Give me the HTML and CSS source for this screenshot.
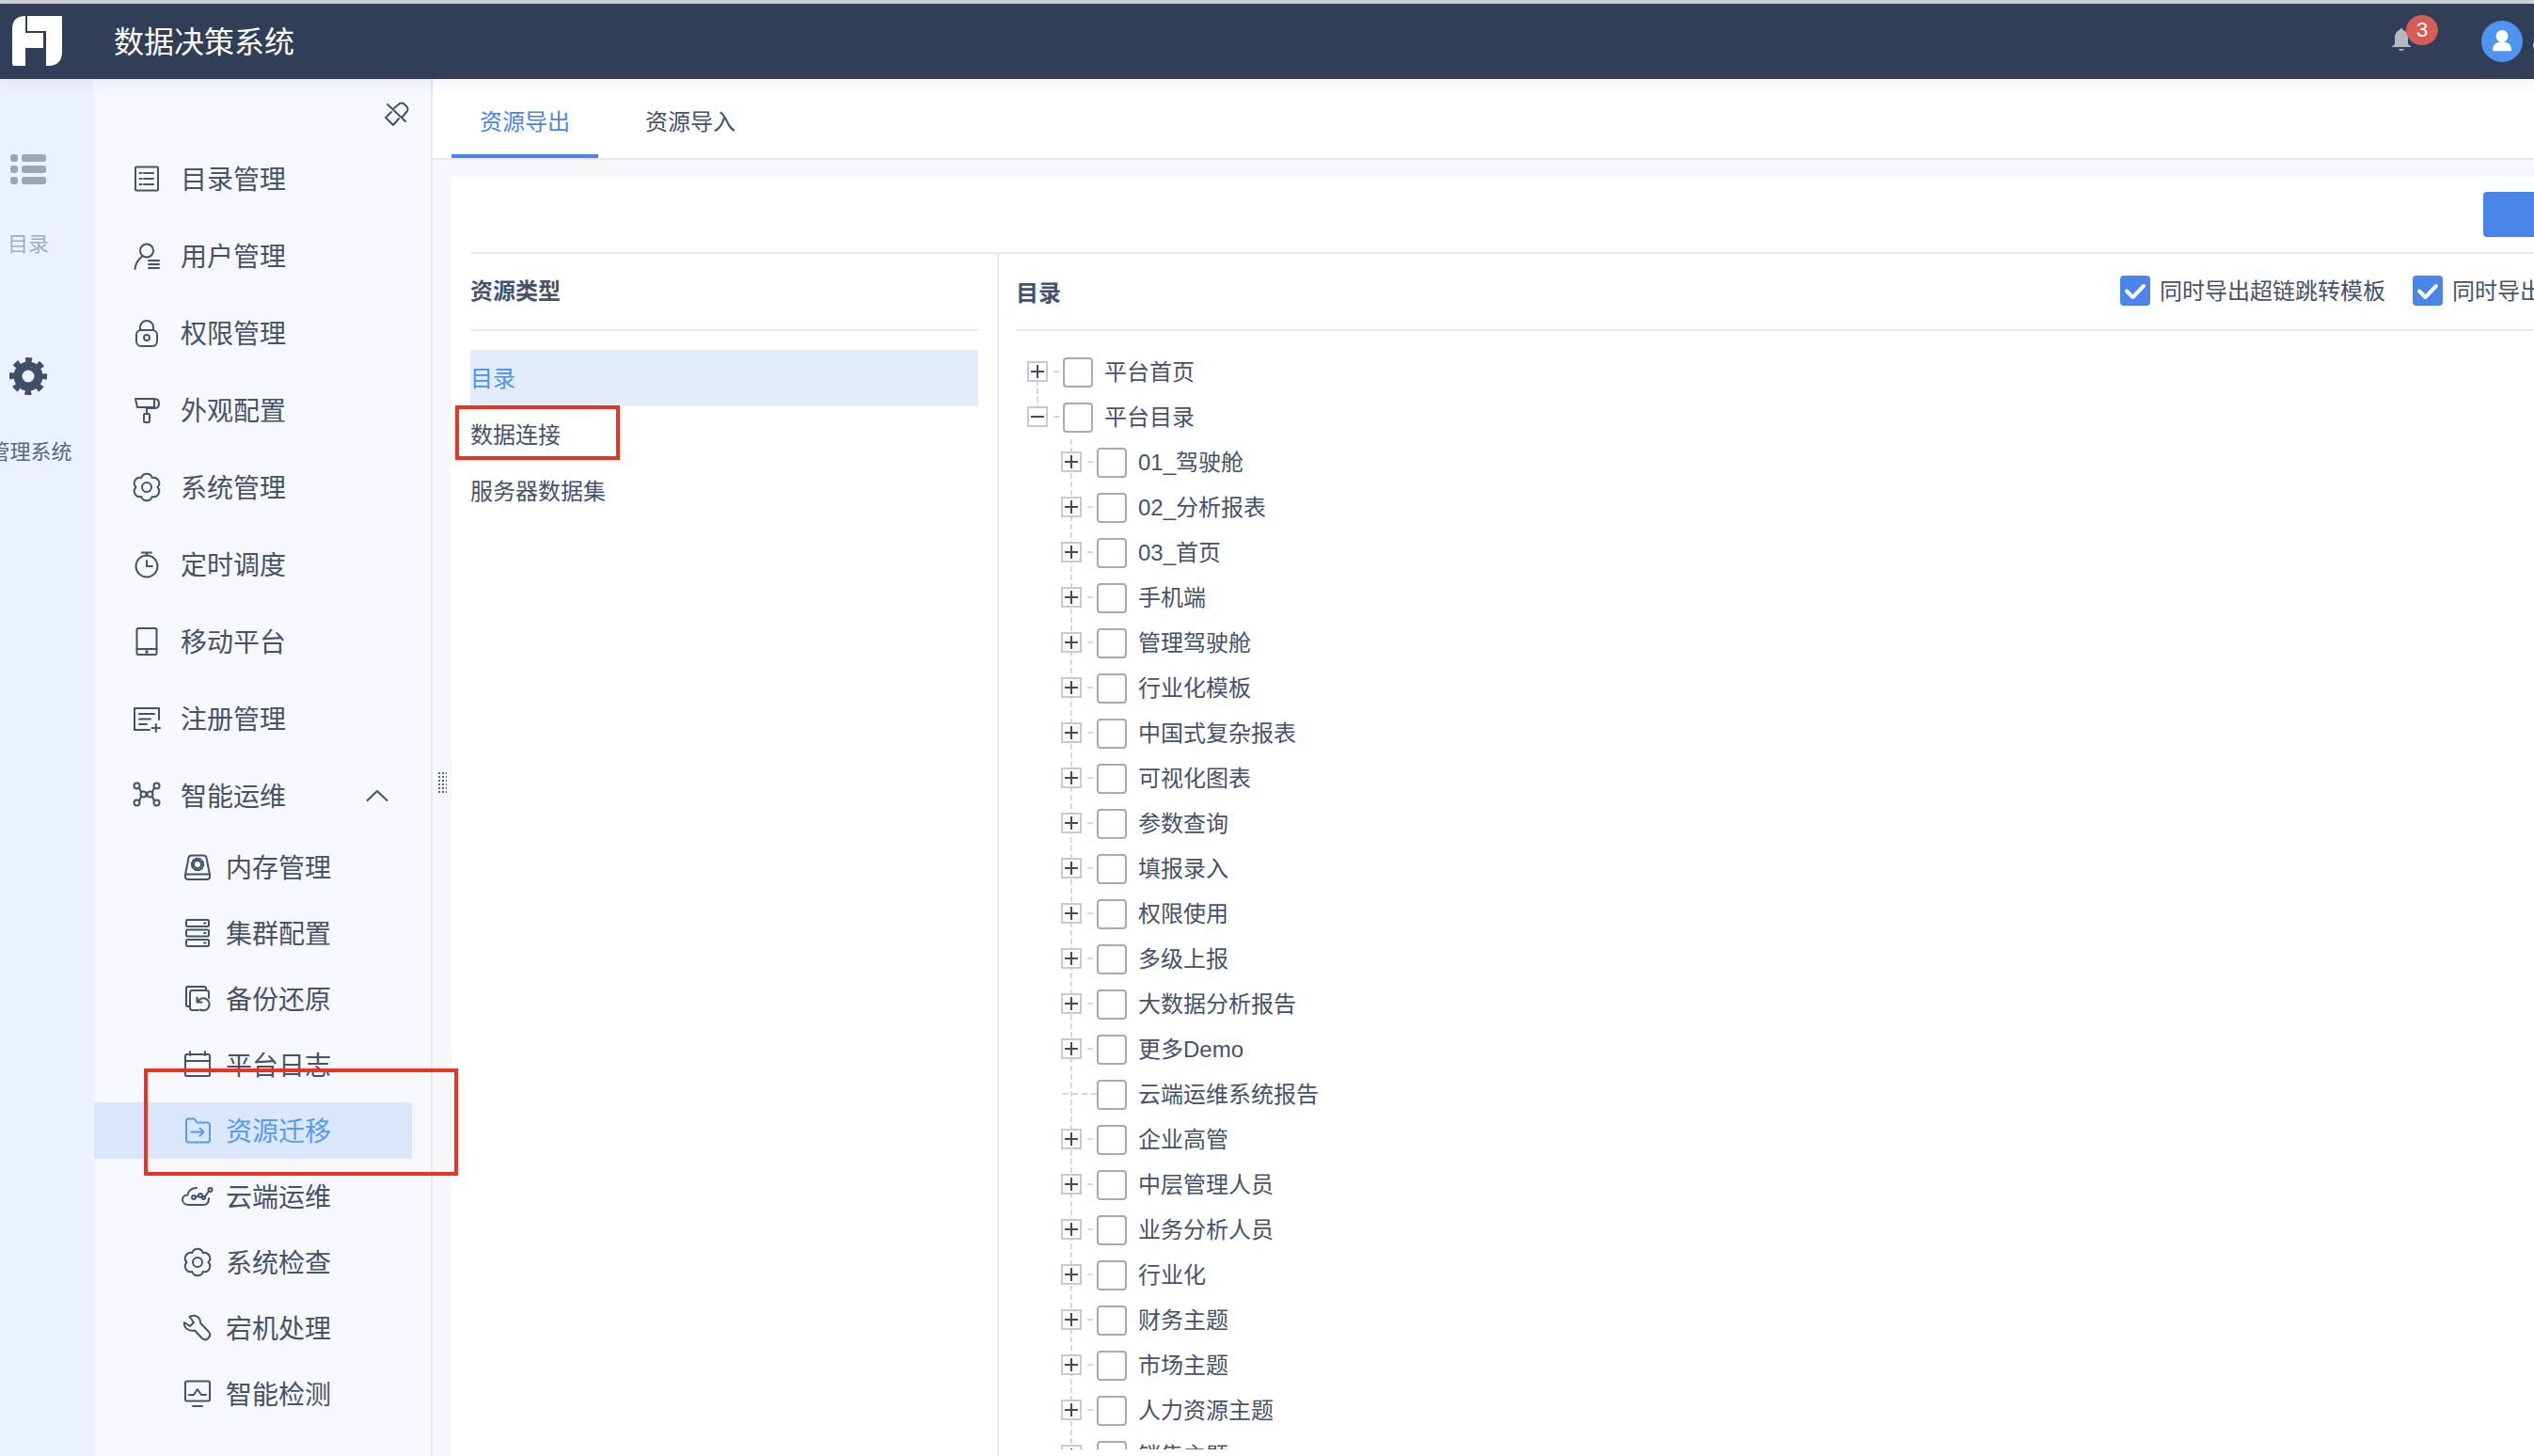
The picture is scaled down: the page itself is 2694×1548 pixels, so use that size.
FILE: index.html
```html
<!DOCTYPE html>
<html lang="zh-CN">
<head>
<meta charset="utf-8">
<title>数据决策系统</title>
<link rel="stylesheet" href="styles.css">
</head>
<body>
<div class="app">
  <div class="top-strip"></div>
  <header class="header">
    <svg class="logo" viewBox="0 0 54 54"><path d="M14 0V18H33V34H14V53H2Q0 53 0 51V14Q0 0 14 0Z"/><path d="M16 0H53V38Q53 53 38 53H36V16H16Z"/></svg>
    <div class="app-title">数据决策系统</div>
    <div class="header-right">
      <div class="bell">
        <svg viewBox="0 0 20 24"><path d="M10 0c1 0 1.500.7 1.500 1.800C15.500 3 17 6.500 17 10v6c0 1.500 1.500 2.500 3 3v1H0v-1c1.500-.5 3-1.500 3-3v-6c0-3.500 1.500-7 5.500-8.200C8.500.7 9 0 10 0Z"/><path d="M7 22h6c-.5 1.300-1.500 2-3 2s-2.500-.7-3-2Z"/></svg>
        <span class="badge">3</span>
      </div>
      <div class="avatar">
        <svg viewBox="0 0 44 44"><circle cx="22" cy="16.500" r="6.500"/><path d="M12 31c0-6 4-8.500 10-8.500S32 25 32 31c0 .8-.5 1.300-1.200 1.300H13.200c-.7 0-1.200-.5-1.200-1.300Z"/></svg>
      </div>
      <div class="username">admin</div>
    </div>
  </header>

  <div class="workspace">
    <aside class="rail">
      <div class="rail-item rail-first">
        <svg class="rail-icon" viewBox="0 0 38 32"><rect x="0" y="0" width="8" height="8" rx="3"/><rect x="12" y="0" width="26" height="8" rx="3"/><rect x="0" y="12" width="8" height="8" rx="3"/><rect x="12" y="12" width="26" height="8" rx="3"/><rect x="0" y="24" width="8" height="8" rx="3"/><rect x="12" y="24" width="26" height="8" rx="3"/></svg>
        <div class="rail-label rail-muted">目录</div>
      </div>
      <div class="rail-item rail-second">
        <svg class="rail-gear" viewBox="0 0 40 40"><circle cx="20" cy="20" r="11" class="gear-ring"/><circle cx="20" cy="20" r="17.500" class="gear-teeth"/></svg>
        <div class="rail-label">管理系统</div>
      </div>
    </aside>

    <nav class="sidebar">
      <div class="pin-row">
        <svg class="icon pin" viewBox="0 0 26 26"><path d="M3 3L22 21M10 7L16 2Q18 1 20 2L24 6Q25 8 24 10L19 16M1 17L7 11M1 17L9 25L15 18"/></svg>
      </div>
      <a class="nav-row"><svg class="icon" viewBox="0 0 28 28"><rect x="2" y="1.500" width="24" height="25" rx="1"/><path d="M6.500 8h2M11 8h10M6.500 14h2M11 14h10M6.500 20h2M11 20h10"/></svg><span>目录管理</span></a>
      <a class="nav-row"><svg class="icon" viewBox="0 0 28 28"><circle cx="14" cy="8.500" r="7"/><path d="M1.500 28C2 22 5 18 9 14.500M16 19h11M16 23h11M16 27h11"/></svg><span>用户管理</span></a>
      <a class="nav-row"><svg class="icon" viewBox="0 0 28 28"><rect x="3" y="11" width="22" height="17" rx="5"/><path d="M7 11V8a7 7 0 0 1 14 0v3"/><circle cx="14" cy="19" r="3"/></svg><span>权限管理</span></a>
      <a class="nav-row"><svg class="icon" viewBox="0 0 28 28"><path d="M2 2H22C25 2 27 4 27 7S25 12 22 12H14V18M22 2V12M2 2L4 11H22"/><rect x="11" y="18" width="6" height="9" rx="1"/></svg><span>外观配置</span></a>
      <a class="nav-row"><svg class="icon" viewBox="0 0 28 28"><path d="M25.500 14A6 6 0 0 1 19.750 24A6 6 0 0 1 8.250 24A6 6 0 0 1 2.500 14A6 6 0 0 1 8.250 4A6 6 0 0 1 19.750 4A6 6 0 0 1 25.500 14Z"/><circle cx="14" cy="14" r="5"/></svg><span>系统管理</span></a>
      <a class="nav-row"><svg class="icon" viewBox="0 0 28 28"><circle cx="14" cy="16" r="11.500"/><path d="M9 1.500H19M14 1.500V4.500M14 10V16H20"/></svg><span>定时调度</span></a>
      <a class="nav-row"><svg class="icon" viewBox="0 0 28 28"><rect x="3.500" y="0" width="21" height="28" rx="1.500"/><path d="M3.500 22H24.500"/><circle cx="14" cy="25" r=".8"/></svg><span>移动平台</span></a>
      <a class="nav-row"><svg class="icon" viewBox="0 0 28 28"><path d="M27 15V3H1V26H17M6 9H22M6 14.500H18M6 20H14M19.500 24H28M23.800 20V28"/></svg><span>注册管理</span></a>
      <a class="nav-row"><svg class="icon" viewBox="0 0 28 28"><circle cx="3.500" cy="3.500" r="3"/><circle cx="24.500" cy="3.500" r="3"/><circle cx="3.500" cy="21.500" r="3"/><circle cx="24.500" cy="21.500" r="3"/><circle cx="10.500" cy="12.500" r="3"/><circle cx="17.500" cy="12.500" r="3"/><path d="M6 5.500L8 10M22 5.500L20 10M6 19.500L8 15M22 19.500L20 15"/></svg><span>智能运维</span><svg class="icon chevron" viewBox="0 0 22 12"><path d="M0.500 11L11 1L21.500 11"/></svg></a>

      <a class="sub-row"><svg class="icon" viewBox="0 0 28 28"><path d="M7.500 1.500H20.500Q22.800 1.500 23.500 4L27 22V24Q27 27 24 27H4Q1 27 1 24V22L4.500 4Q5.200 1.500 7.500 1.500ZM1 21.500H27"/><circle cx="14" cy="11" r="4"/><circle cx="14" cy="11" r="6" class="teeth"/></svg><span>内存管理</span></a>
      <a class="sub-row"><svg class="icon" viewBox="0 0 28 28"><rect x="2" y="0" width="24" height="7" rx="1.500"/><rect x="2" y="10.500" width="24" height="7" rx="1.500"/><rect x="2" y="21" width="24" height="7" rx="1.500"/><path d="M21 3.500h1.500M21 14h1.500M21 24.500h1.500"/></svg><span>集群配置</span></a>
      <a class="sub-row"><svg class="icon" viewBox="0 0 28 28"><path d="M5 22H3.500Q2 22 2 20.500V2.500Q2 1 3.500 1H21Q23 1 23 3V5M15 26H8.500Q6 26 6 23.500V7.500Q6 5 8.500 5H24Q26 5 26 7.500V13M14.500 16.500A6.500 6.500 0 1 1 17 25.500M13.500 12.500V17.500H18.500"/></svg><span>备份还原</span></a>
      <a class="sub-row"><svg class="icon" viewBox="0 0 28 28"><path d="M6 0V4M22 0V4"/><rect x="1" y="3" width="26" height="23" rx="1.500"/><path d="M1 10H27M1 20H27"/></svg><span>平台日志</span></a>
      <a class="sub-row is-active"><svg class="icon" viewBox="0 0 28 28"><path d="M2 4Q2 1.500 4 1.500H10.500L13.500 5.500H24.500Q27 5.500 27 8V24Q27 26.500 24.500 26.500H4.500Q2 26.500 2 24ZM7.500 15.500H20.500M16.500 11.500L20.500 15.500L16.500 19.500"/></svg><span>资源迁移</span></a>
      <a class="sub-row"><svg class="icon" viewBox="0 0 28 28"><path d="M26 16C26 21 24 23 20 23H5C1 23 -2 21 -2 17.500C-2 14 1 12.500 3.500 12.500C4 8 8 5 13 5"/><circle cx="10" cy="15" r="2"/><circle cx="17" cy="13" r="2"/><circle cx="20.500" cy="15.500" r="1.500"/><circle cx="27.500" cy="7" r="2"/><path d="M11.800 14.500L15.200 13.500M18.500 14L19.500 14.800M21.800 14.500L26 8.500"/></svg><span>云端运维</span></a>
      <a class="sub-row"><svg class="icon" viewBox="0 0 28 28"><path d="M25.500 14A6 6 0 0 1 19.750 24A6 6 0 0 1 8.250 24A6 6 0 0 1 2.500 14A6 6 0 0 1 8.250 4A6 6 0 0 1 19.750 4A6 6 0 0 1 25.500 14Z"/><circle cx="14" cy="14" r="5"/></svg><span>系统检查</span></a>
      <a class="sub-row"><svg class="icon" viewBox="0 0 28 28"><path d="M0 8L6 12L10 8L5.500 2C11 -1 17 2 17 8.500L26 18C29.500 22.500 23.500 29 19 25L11 16.500C5 18 -1 14 0 8Z"/></svg><span>宕机处理</span></a>
      <a class="sub-row"><svg class="icon" viewBox="0 0 28 28"><rect x="1" y="0.500" width="26" height="21" rx="1.500"/><path d="M5 15H10L14 9L18 15H23M9 27H19"/></svg><span>智能检测</span></a>
    </nav>

    <main class="main">
      <div class="tabs">
        <div class="tab is-current">资源导出</div>
        <div class="tab">资源导入</div>
      </div>
      <section class="panel">
        <div class="toolbar"><div class="primary-btn"></div></div>
        <div class="columns">
          <div class="types">
            <div class="col-head">资源类型</div>
            <ul class="type-list">
              <li class="type-item is-selected">目录</li>
              <li class="type-item">数据连接</li>
              <li class="type-item">服务器数据集</li>
            </ul>
          </div>
          <div class="catalog">
            <div class="cat-head">
              <div class="cat-title">目录</div>
              <label class="option"><span class="checked"><svg viewBox="0 0 32 32"><path d="M7 16.500L13.500 23L25 11"/></svg></span><span class="option-text">同时导出超链跳转模板</span></label>
              <label class="option"><span class="checked"><svg viewBox="0 0 32 32"><path d="M7 16.500L13.500 23L25 11"/></svg></span><span class="option-text">同时导出数据连接</span></label>
            </div>
            <div class="tree">
              <div class="tree-root">
                <div class="node"><i class="exp"></i><i class="dash"></i><i class="box"></i><span class="node-label">平台首页</span></div>
                <div class="node"><i class="exp exp-open"></i><i class="dash"></i><i class="box"></i><span class="node-label">平台目录</span></div>
              </div>
              <div class="tree-children">
                <div class="node"><i class="exp"></i><i class="dash"></i><i class="box"></i><span class="node-label">01_驾驶舱</span></div>
                <div class="node"><i class="exp"></i><i class="dash"></i><i class="box"></i><span class="node-label">02_分析报表</span></div>
                <div class="node"><i class="exp"></i><i class="dash"></i><i class="box"></i><span class="node-label">03_首页</span></div>
                <div class="node"><i class="exp"></i><i class="dash"></i><i class="box"></i><span class="node-label">手机端</span></div>
                <div class="node"><i class="exp"></i><i class="dash"></i><i class="box"></i><span class="node-label">管理驾驶舱</span></div>
                <div class="node"><i class="exp"></i><i class="dash"></i><i class="box"></i><span class="node-label">行业化模板</span></div>
                <div class="node"><i class="exp"></i><i class="dash"></i><i class="box"></i><span class="node-label">中国式复杂报表</span></div>
                <div class="node"><i class="exp"></i><i class="dash"></i><i class="box"></i><span class="node-label">可视化图表</span></div>
                <div class="node"><i class="exp"></i><i class="dash"></i><i class="box"></i><span class="node-label">参数查询</span></div>
                <div class="node"><i class="exp"></i><i class="dash"></i><i class="box"></i><span class="node-label">填报录入</span></div>
                <div class="node"><i class="exp"></i><i class="dash"></i><i class="box"></i><span class="node-label">权限使用</span></div>
                <div class="node"><i class="exp"></i><i class="dash"></i><i class="box"></i><span class="node-label">多级上报</span></div>
                <div class="node"><i class="exp"></i><i class="dash"></i><i class="box"></i><span class="node-label">大数据分析报告</span></div>
                <div class="node"><i class="exp"></i><i class="dash"></i><i class="box"></i><span class="node-label">更多Demo</span></div>
                <div class="node"><i class="leaf-dash"></i><i class="box"></i><span class="node-label">云端运维系统报告</span></div>
                <div class="node"><i class="exp"></i><i class="dash"></i><i class="box"></i><span class="node-label">企业高管</span></div>
                <div class="node"><i class="exp"></i><i class="dash"></i><i class="box"></i><span class="node-label">中层管理人员</span></div>
                <div class="node"><i class="exp"></i><i class="dash"></i><i class="box"></i><span class="node-label">业务分析人员</span></div>
                <div class="node"><i class="exp"></i><i class="dash"></i><i class="box"></i><span class="node-label">行业化</span></div>
                <div class="node"><i class="exp"></i><i class="dash"></i><i class="box"></i><span class="node-label">财务主题</span></div>
                <div class="node"><i class="exp"></i><i class="dash"></i><i class="box"></i><span class="node-label">市场主题</span></div>
                <div class="node"><i class="exp"></i><i class="dash"></i><i class="box"></i><span class="node-label">人力资源主题</span></div>
                <div class="node"><i class="exp"></i><i class="dash"></i><i class="box"></i><span class="node-label">销售主题</span></div>
              </div>
            </div>
          </div>
        </div>
      </section>
    </main>

    <div class="drag-handle"></div>
    <div class="callout callout-nav"></div>
    <div class="callout callout-type"></div>
  </div>
</div>
</body>
</html>
```
FILE: styles.css
```css
* { box-sizing: border-box; }
html, body { margin: 0; padding: 0; }
body {
  width: 2694px;
  height: 1548px;
  overflow: hidden;
  background: #fff;
  color: #45526b;
  font-family: "Liberation Sans", "Noto Sans CJK SC", sans-serif;
}
.app { display: flex; flex-direction: column; width: 2694px; height: 1548px; overflow: hidden; }
.top-strip { height: 4px; flex: none; background: #cfd2d7; }

/* header */
.header {
  position: relative;
  z-index: 2;
  flex: none;
  height: 80px;
  display: flex;
  align-items: center;
  background: #303e58;
  box-shadow: 0 4px 14px rgba(40, 50, 70, .07);
}
.logo { width: 54px; height: 54px; margin-left: 13px; fill: #fff; flex: none; }
.app-title { margin: 1px 0 0 54px; font-size: 32px; line-height: 44px; color: #fff; }
.header-right { margin-left: auto; display: flex; align-items: center; flex: none; }
.bell { position: relative; width: 20px; height: 24px; margin-top: -4px; }
.bell svg { display: block; width: 20px; height: 24px; fill: #b4b8c1; }
.badge {
  position: absolute;
  left: 15px;
  top: -14px;
  width: 34px;
  height: 32px;
  border-radius: 50%;
  background: #d65c58;
  color: #fff;
  font-size: 22px;
  line-height: 32px;
  text-align: center;
}
.avatar { width: 44px; height: 44px; margin-left: 75px; border-radius: 50%; background: #4f94ee; }
.avatar svg { display: block; width: 44px; height: 44px; fill: #fff; }
.username { width: 2px; margin-left: 10px; font-size: 24px; color: #ccd0d6; white-space: nowrap; }

/* layout */
.workspace { position: relative; flex: 1; min-height: 0; display: flex; }

/* rail */
.rail { flex: none; width: 100px; background: #ebf1fd; overflow: hidden; }
.rail-item { width: 62px; display: flex; flex-direction: column; align-items: center; }
.rail-first { padding-top: 80px; }
.rail-second { padding-top: 105px; }
.rail-icon { width: 38px; height: 32px; fill: #9aa5b8; margin-bottom: 49px; margin-left: -2px; }
.rail-gear { width: 40px; height: 40px; margin-bottom: 46px; margin-left: -2px; }
.gear-ring { fill: none; stroke: #404e68; stroke-width: 9; }
.gear-teeth { fill: none; stroke: #404e68; stroke-width: 5; stroke-dasharray: 6.900 6.844; stroke-dashoffset: 3.450; }
.rail-label { font-size: 22px; line-height: 30px; white-space: nowrap; color: #5a6780; margin-left: 3px; }
.rail-label.rail-muted { color: #a3adbd; margin-left: -2px; }

/* sidebar */
.sidebar {
  flex: none;
  width: 360px;
  display: flex;
  flex-direction: column;
  background: #f6f8fd;
  border-right: 2px solid #e6e8f0;
  padding-right: 20px;
}
.pin-row { flex: none; height: 65px; padding-top: 24px; padding-right: 3px; display: flex; justify-content: flex-end; align-items: flex-start; }
.icon {
  flex: none;
  display: block;
  width: 28px;
  height: 28px;
  fill: none;
  stroke: #45526b;
  stroke-width: 2;
  stroke-linecap: round;
  stroke-linejoin: round;
  overflow: visible;
}
.pin { width: 26px; height: 26px; }
.teeth { stroke-dasharray: 1.500 2.200; stroke-width: 2.500; }
.nav-row { flex: none; display: flex; align-items: center; height: 82px; padding-left: 42px; font-size: 28px; color: #45526b; }
.nav-row span { margin-left: 22px; padding-top: 3px; line-height: 40px; }
.chevron { width: 22px; height: 12px; margin-left: auto; margin-right: 26px; }
.sub-row { flex: none; display: flex; align-items: center; height: 60px; margin: 5px 0; padding-left: 96px; font-size: 28px; color: #45526b; }
.sub-row span { margin-left: 16px; padding-top: 3px; line-height: 40px; }
.sub-row.is-active { background: #dae6f9; color: #559bf0; }
.sub-row.is-active .icon { stroke: #559bf0; }

/* main */
.main { flex: 1; min-width: 0; display: flex; flex-direction: column; background: #f6f7f9; }
.tabs { flex: none; height: 86px; padding-left: 20px; display: flex; gap: 20px; background: #fff; border-bottom: 2px solid #e8e9ef; }
.tab { height: 84px; width: 156px; padding-top: 3px; display: flex; align-items: center; justify-content: center; font-size: 24px; color: #45526b; }
.tab.is-current { padding-top: 7px; color: #4a86e8; border-bottom: 4px solid #4a86e8; }
.panel { flex: 1; min-height: 0; margin: 18px 0 0 20px; padding-left: 20px; background: #fff; }
.toolbar { height: 82px; display: flex; justify-content: flex-end; padding-top: 16px; border-bottom: 2px solid #e8e9ef; }
.primary-btn { width: 54px; height: 48px; border-radius: 4px 0 0 4px; background: #4a86e8; }
.columns { display: flex; height: 1278px; }
.types { flex: none; width: 560px; padding-right: 20px; }
.col-head { height: 82px; display: flex; align-items: center; padding-bottom: 6px; font-size: 24px; font-weight: 700; color: #45526b; border-bottom: 2px solid #e8e9ef; }
.type-list { list-style: none; margin: 20px 0 0; padding: 0; }
.type-item { height: 60px; display: flex; align-items: center; padding-bottom: 4px; font-size: 24px; color: #45526b; }
.type-item.is-selected { background: #e2ecfb; color: #4f8fee; }
.catalog { flex: 1; min-width: 0; border-left: 2px solid #e8e9ef; padding-left: 18px; }
.cat-head { height: 82px; display: flex; align-items: center; padding-bottom: 2px; border-bottom: 2px solid #e8e9ef; white-space: nowrap; }
.cat-title { flex: 0 0 1174px; padding-top: 1px; font-size: 24px; font-weight: 700; color: #45526b; }
.option { display: flex; flex: none; align-items: center; margin-right: 29px; font-size: 24px; color: #45526b; }
.option-text { padding-bottom: 3px; margin-left: -1px; }
.checked { width: 32px; height: 32px; margin-right: 11px; border-radius: 4px; background: #4a86e8; }
.checked svg { display: block; width: 32px; height: 32px; fill: none; stroke: #fff; stroke-width: 4; stroke-linecap: round; stroke-linejoin: round; }

/* tree */
.tree { height: 1189px; padding-top: 19px; overflow: hidden; }
.tree-root {
  background-image: repeating-linear-gradient(#d5d8df 0 6px, transparent 6px 9px);
  background-repeat: no-repeat;
  background-size: 2px 48px;
  background-position: 22px 24px;
}
.tree-children {
  padding-left: 36px;
  background-image: linear-gradient(#d5d8df 6px, transparent 6px);
  background-repeat: repeat-y;
  background-size: 2px 9px;
  background-position: 58px 0;
}
.node { display: flex; align-items: center; height: 48px; padding-left: 12px; font-size: 24px; color: #45526b; }
.exp {
  flex: none;
  width: 22px;
  height: 22px;
  border: 2px solid #c5cad4;
  background:
    linear-gradient(#3d4b66, #3d4b66) center / 14px 2px no-repeat,
    linear-gradient(#3d4b66, #3d4b66) center / 2px 14px no-repeat,
    #fff;
}
.exp-open { background: linear-gradient(#3d4b66, #3d4b66) center / 14px 2px no-repeat, #fff; }
.dash { flex: none; width: 16px; height: 2px; background: linear-gradient(90deg, transparent 6px, #d5d8df 6px, #d5d8df 12px, transparent 12px); }
.leaf-dash { flex: none; width: 38px; height: 2px; background: linear-gradient(90deg, #d5d8df 6px, transparent 6px) 12px 0 / 10px 2px repeat-x; }
.box { flex: none; width: 32px; height: 32px; margin-top: 2px; border: 2px solid #a3aabb; border-radius: 4px; background: #fff; }
.node-label { margin-left: 12px; padding-top: 2px; line-height: 34px; white-space: nowrap; }

/* overlays */
.drag-handle {
  position: absolute;
  left: 466px;
  top: 737px;
  width: 9px;
  height: 24px;
  background: radial-gradient(circle at 1px 1px, #5a6680 1px, transparent 1.300px) 0 0 / 4px 4px;
}
.callout { position: absolute; border: 4px solid #ea3323; }
.callout-nav { left: 153px; top: 1052px; width: 334px; height: 114px; }
.callout-type { left: 484px; top: 347px; width: 175px; height: 58px; }
```
